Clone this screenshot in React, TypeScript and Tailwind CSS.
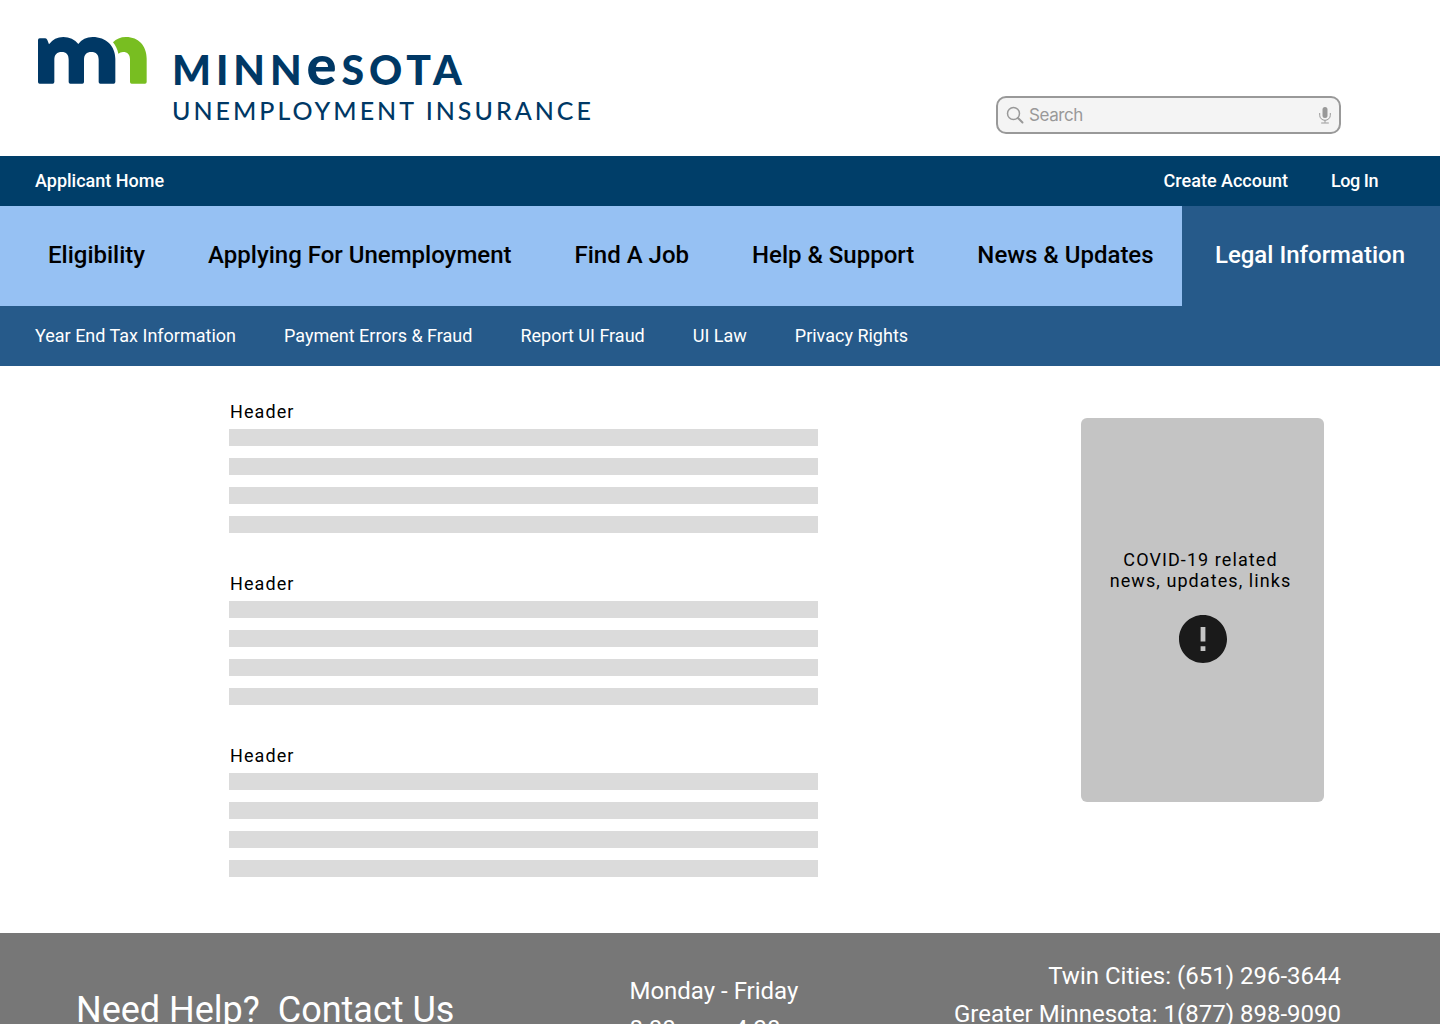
const mainLinks = ["Eligibility", "Applying For Unemployment", "Find A Job", "Help & Support", "News & Updates"];

const subLinks = [
  "Year End Tax Information",
  "Payment Errors & Fraud",
  "Report UI Fraud",
  "UI Law",
  "Privacy Rights",
];

function Mark() {
  return (
    <svg viewBox="54 51 327 141" className="h-[47px] w-[109px] shrink-0" aria-hidden="true">
      <path
        fill="#003865"
        d="M54 60Q54 55 59 55H76Q80 55 82 60L87 73Q103 51 130 51Q158 51 175 72Q190 51 218 51C258 51 286 78 286 116V186Q286 191 281 191H241Q236 191 236 186V119C236 104 228 96 214 96C200 96 192 104 192 119V186Q192 191 187 191H151Q146 191 146 186V119C146 104 139 96 125 96C111 96 103 104 103 119V186Q103 191 98 191H59Q54 191 54 186Z"
      />
      <path
        fill="#78BE21"
        d="M279 67C289 57 301 51 318 51C356 51 380 78 380 116V186Q380 191 375 191H335Q330 191 330 186V119C330 104 323 96 309 96Q301 96 295 101C292 87 287 77 279 67Z"
      />
    </svg>
  );
}

function Logo() {
  return (
    <a href="#" className="flex items-start gap-[25px] font-['Lato',sans-serif] text-[#003865]">
      <Mark />
      <span className="flex flex-col pt-[11px]">
        <span className="flex h-8 items-baseline whitespace-nowrap text-[41px] leading-8 font-black tracking-[0.12em]">
          MINN<span className="text-[56px] leading-8">e</span>SOTA
        </span>
        <span className="mt-4 whitespace-nowrap text-[25px] leading-7 font-medium tracking-[0.12em]">
          UNEMPLOYMENT INSURANCE
        </span>
      </span>
    </a>
  );
}

function SearchBox() {
  return (
    <div className="mb-[22px] flex h-[38px] w-[345px] items-center rounded-[10px] border-2 border-[#999] bg-[#f4f4f4] px-2 text-[#999]">
      <svg viewBox="0 0 18 18" className="size-[18px] shrink-0" fill="none" stroke="currentColor" aria-hidden="true">
        <circle cx="7.5" cy="7.5" r="6" strokeWidth="1.5" />
        <path d="M12 12l4.5 4.5" strokeWidth="2" strokeLinecap="round" />
      </svg>
      <input
        type="search"
        aria-label="Search"
        placeholder="Search"
        className="ml-[5px] min-w-0 flex-1 bg-transparent font-['Inter',sans-serif] text-[17px] leading-6 tracking-tight outline-none placeholder:text-[#999]"
      />
      <button type="button" aria-label="Voice search">
        <svg viewBox="0 0 12 18" className="h-[18px] w-3" fill="none" stroke="currentColor" aria-hidden="true">
          <rect x="3.5" y="1" width="5" height="11" rx="2.5" fill="currentColor" stroke="none" />
          <path d="M.7 7v2.3a5.3 5 0 0 0 10.6 0V7M6 14.3v2.4M2.2 17h7.6" strokeWidth="1" />
        </svg>
      </button>
    </div>
  );
}

function TextBlock() {
  return (
    <section>
      <h2 className="pl-px text-lg leading-5 tracking-[0.06em]">Header</h2>
      <div className="mt-[7px] flex flex-col gap-3">
        {[0, 1, 2, 3].map((i) => (
          <div key={i} className="h-[17px] bg-[#dbdbdb]" />
        ))}
      </div>
    </section>
  );
}

export default function App() {
  return (
    <div className="min-h-screen bg-white font-['Roboto',sans-serif] text-black">
      <header>
        <div className="flex h-[156px] items-start justify-between pt-[37px] pr-[99px] pl-[38px]">
          <Logo />
          <div className="flex h-full items-end">
            <SearchBox />
          </div>
        </div>

        <nav aria-label="Account" className="flex h-[50px] items-center bg-[#003e69] pr-[62px] pl-[35px] text-lg font-medium text-white">
          <a href="#">Applicant Home</a>
          <a href="#" className="ml-auto">Create Account</a>
          <a href="#" className="ml-[43px] tracking-tight">Log In</a>
        </nav>

        <nav aria-label="Main" className="flex h-[100px] bg-[#96c1f3] text-2xl font-medium whitespace-nowrap">
          <div className="flex flex-1 items-center gap-[63px] pb-0.5 pl-12">
            {mainLinks.map((t) => (
              <a key={t} href="#">{t}</a>
            ))}
          </div>
          <a href="#" aria-current="page" className="flex w-[258px] items-center justify-center bg-[#265a8a] pr-0.5 pb-0.5 text-white">
            Legal Information
          </a>
        </nav>

        <nav aria-label="Legal Information" className="flex h-[60px] items-center gap-12 bg-[#265a8a] pl-[35px] text-lg text-white">
          {subLinks.map((t) => (
            <a key={t} href="#">{t}</a>
          ))}
        </nav>
      </header>

      <main className="flex items-start justify-between pt-9 pr-[116px] pb-14 pl-[229px]">
        <div className="flex w-[589px] flex-col gap-[41px]">
          <TextBlock />
          <TextBlock />
          <TextBlock />
        </div>
        <aside className="mt-4 flex h-96 w-[243px] flex-col items-center justify-center gap-6 rounded-md bg-[#c4c4c4] pb-[9px]">
          <p className="pr-1 text-center text-lg leading-[21px] tracking-[0.06em]">
            COVID-19 related
            <br />
            news, updates, links
          </p>
          <svg viewBox="2 2 20 20" className="size-12" fill="#1a1a1a" aria-hidden="true">
            <path d="M12 2C6.48 2 2 6.48 2 12s4.48 10 10 10 10-4.48 10-10S17.52 2 12 2zm1 15h-2v-2h2v2zm0-4h-2V7h2v6z" />
          </svg>
        </aside>
      </main>

      <footer className="grid grid-cols-[7fr_9fr] items-center bg-[#777] pt-6 pr-[99px] pl-[76px] whitespace-nowrap text-white">
        <h2 className="text-4xl whitespace-pre">Need Help?  Contact Us</h2>
        <div className="flex items-center justify-between text-2xl leading-[38px]">
          <p>
            Monday - Friday
            <br />
            8:00 am - 4:30 pm
          </p>
          <p className="pb-[30px] text-right">
            Twin Cities: (651) 296-3644
            <br />
            Greater Minnesota: 1(877) 898-9090
          </p>
        </div>
      </footer>
    </div>
  );
}
